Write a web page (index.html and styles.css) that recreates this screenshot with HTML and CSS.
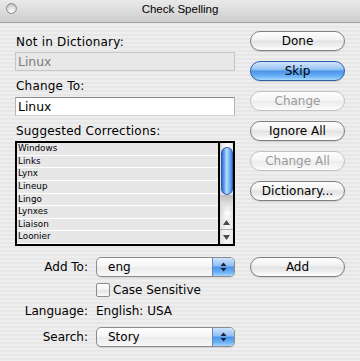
FILE: index.html
```html
<!DOCTYPE html>
<html>
<head>
<meta charset="utf-8">
<title>Check Spelling</title>
<link rel="stylesheet" href="styles.css">
</head>
<body>
<div class="window">
  <div class="titlebar">
    <span class="close"></span>
    <span class="title">Check Spelling</span>
  </div>
  <div class="content">
    <div class="top">
      <div class="left">
        <div class="label first">Not in Dictionary:</div>
        <div class="field disabled">Linux</div>
        <div class="label">Change To:</div>
        <div class="field input">Linux</div>
        <div class="label">Suggested Corrections:</div>
        <div class="list">
          <div class="rows">
            <div class="row">Windows</div>
            <div class="row">Links</div>
            <div class="row">Lynx</div>
            <div class="row">Lineup</div>
            <div class="row">Lingo</div>
            <div class="row">Lynxes</div>
            <div class="row">Liaison</div>
            <div class="row">Loonier</div>
          </div>
          <div class="scrollbar">
            <div class="track"><div class="thumb"></div><div class="shade"></div></div>
            <div class="arrow up"><svg width="7" height="5" viewBox="0 0 7 5"><path d="M3.5 0 L7 5 H0 Z" fill="#4a4a4a"/></svg></div>
            <div class="arrow down"><svg width="7" height="5" viewBox="0 0 7 5"><path d="M0 0 H7 L3.5 5 Z" fill="#4a4a4a"/></svg></div>
          </div>
        </div>
      </div>
      <div class="buttons">
        <button class="btn">Done</button>
        <button class="btn default">Skip</button>
        <button class="btn off">Change</button>
        <button class="btn">Ignore All</button>
        <button class="btn off">Change All</button>
        <button class="btn">Dictionary...</button>
      </div>
    </div>
    <div class="form">
      <div class="frow r1">
        <span class="lbl">Add To:</span>
        <div class="popup"><span class="ptext">eng</span><span class="parrow"><svg width="7" height="12" viewBox="0 0 7 12"><path d="M3.5 1.5 L6.5 5 H0.5 Z M3.5 10.5 L6.5 7 H0.5 Z" fill="#17233a"/></svg></span></div>
        <button class="btn add">Add</button>
      </div>
      <div class="frow r2">
        <span class="lbl"></span>
        <span class="check"></span><span class="ctext">Case Sensitive</span>
      </div>
      <div class="frow r3">
        <span class="lbl">Language:</span>
        <span class="val">English: USA</span>
      </div>
      <div class="frow r4">
        <span class="lbl">Search:</span>
        <div class="popup"><span class="ptext">Story</span><span class="parrow"><svg width="7" height="12" viewBox="0 0 7 12"><path d="M3.5 1.5 L6.5 5 H0.5 Z M3.5 10.5 L6.5 7 H0.5 Z" fill="#17233a"/></svg></span></div>
      </div>
    </div>
  </div>
</div>
</body>
</html>
```

FILE: styles.css
```css
* { box-sizing: border-box; }
html, body { margin: 0; padding: 0; }
body { font-family: "DejaVu Sans", sans-serif; font-size: 12px; color: #000; }

.window {
  width: 360px;
  height: 361px;
  overflow: hidden;
  background: repeating-linear-gradient(to bottom, #eeeeee 0px, #eeeeee 2px, #e7e7e7 2px, #e7e7e7 4px);
}

.titlebar {
  position: relative;
  height: 23px;
  border-bottom: 1px solid #a6a6a6;
  background: linear-gradient(to bottom, #e9e9e9 0%, #d9d9d9 60%, #cdcdcd 100%);
  display: flex;
  justify-content: center;
  align-items: flex-start;
  padding-top: 2px;
}
.close {
  position: absolute;
  left: 6px;
  top: 3px;
  width: 11px;
  height: 11px;
  border-radius: 50%;
  border: 1px solid #8c8c8c;
  background: radial-gradient(circle at 50% 80%, #ffffff 0%, #e2e2e2 45%, #b0b0b0 100%);
}
.title {
  font-family: "Liberation Sans", sans-serif;
  font-size: 11.5px;
  line-height: 14px;
}

.content { padding: 0 15px; }

.top { display: flex; align-items: flex-start; }
.left { width: 220px; display: flex; flex-direction: column; }

.label { line-height: 15px; letter-spacing: 0.2px; padding-left: 1px; margin-top: 8px; }
.label.first { margin-top: 12px; }

.field {
  height: 19px;
  margin-top: 2px;
  line-height: 17px;
  padding-left: 2px;
  font-size: 12.4px;
}
.field.disabled { background: #e8e8e8; border: 1px solid #c6c6c6; color: #7c7c7c; }
.field.input {
  background: #fff;
  border: 1px solid #b4b4b4;
  border-top-color: #8a8a8a;
  border-bottom-color: #d2d2d2;
  margin-top: 3px;
}

.list {
  margin-top: 2px;
  height: 105px;
  border: 2px solid #000;
  display: flex;
}
.rows {
  flex: 1;
  display: flex;
  flex-direction: column;
  overflow: hidden;
  border-right: 2px solid #000;
}
.row {
  flex: none;
  height: 12.625px;
  background: #e7e7e7;
  border-bottom: 1px solid #fff;
  font-size: 8.8px;
  line-height: 11px;
  padding-left: 1px;
}

.scrollbar { width: 13px; display: flex; flex-direction: column; }
.track {
  flex: 1;
  padding-top: 4px;
  background: linear-gradient(to right, #d6d6d6 0%, #f4f4f4 35%, #ffffff 60%, #e4e4e4 100%);
  display: flex;
  flex-direction: column;
  align-items: center;
}
.thumb {
  width: 12px;
  height: 48px;
  border-radius: 6px;
  border: 1px solid #2f5fae;
  background: linear-gradient(to right, #2d6ed2 0%, #5c9ff0 22%, #b6d9fd 45%, #82bcf6 70%, #3b83e2 100%);
}
.shade {
  width: 13px;
  height: 18px;
  background: linear-gradient(to bottom, #bdbdbd 0%, #dcdcdc 45%, rgba(255,255,255,0) 100%);
  border-radius: 0 0 6px 6px;
}
.arrow {
  display: flex;
  align-items: center;
  justify-content: center;
  background: linear-gradient(to right, #dedede 0%, #f7f7f7 50%, #e6e6e6 100%);
}
.arrow.up { height: 15px; border-bottom: 1px solid #b0b0b0; }
.arrow.down { height: 14px; }

.buttons {
  margin-left: 15px;
  padding-top: 8px;
  display: flex;
  flex-direction: column;
  gap: 10px;
}
.btn {
  width: 95px;
  height: 20px;
  padding: 0;
  border-radius: 10px;
  border: 1px solid #7f7f7f;
  font-family: "DejaVu Sans", sans-serif;
  font-size: 12px;
  line-height: 18px;
  color: #000;
  background: linear-gradient(to bottom, #fdfdfd 0%, #f3f3f3 40%, #e3e3e3 52%, #eeeeee 75%, #ffffff 100%);
  box-shadow: 0 1px 1px rgba(0,0,0,0.12);
}
.btn.default {
  border-color: #2c5ca6;
  background: linear-gradient(to bottom, #d3e6fc 0%, #9ac5f4 40%, #4c95ea 52%, #68b0f4 78%, #a8dafd 100%);
}
.btn.off {
  border-color: #c2c2c2;
  color: #9a9a9a;
  background: linear-gradient(to bottom, #fdfdfd 0%, #f6f6f6 45%, #ededed 52%, #f4f4f4 80%, #fdfdfd 100%);
  box-shadow: none;
}

.form { display: flex; flex-direction: column; }
.frow { display: flex; align-items: center; height: 20px; }
.r1 { margin-top: 11px; }
.r2 { margin-top: 3px; }
.r3 { margin-top: 1px; }
.r4 { margin-top: 6px; }
.lbl { width: 73px; margin-right: 8px; text-align: right; flex: none; }

.popup {
  width: 139px;
  height: 20px;
  border: 1px solid #8c8c8c;
  border-radius: 5px;
  display: flex;
  overflow: hidden;
  background: linear-gradient(to bottom, #ffffff 0%, #f6f6f6 45%, #ebebeb 55%, #f8f8f8 100%);
  box-shadow: 0 1px 1px rgba(0,0,0,0.1);
}
.ptext { flex: 1; padding-left: 11px; line-height: 18px; }
.parrow {
  width: 22px;
  display: flex;
  align-items: center;
  justify-content: center;
  border-left: 1px solid #5d86c4;
  background: linear-gradient(to bottom, #cfe4fc 0%, #92c0f3 42%, #4d95ea 52%, #6cb2f5 80%, #a5d6fc 100%);
}
.btn.add { margin-left: 15px; }

.check {
  width: 14px;
  height: 14px;
  border: 1px solid #8a8a8a;
  border-radius: 2px;
  background: linear-gradient(to bottom, #ffffff 0%, #f2f2f2 50%, #e4e4e4 55%, #fbfbfb 100%);
  flex: none;
}
.ctext { margin-left: 3px; }
```
